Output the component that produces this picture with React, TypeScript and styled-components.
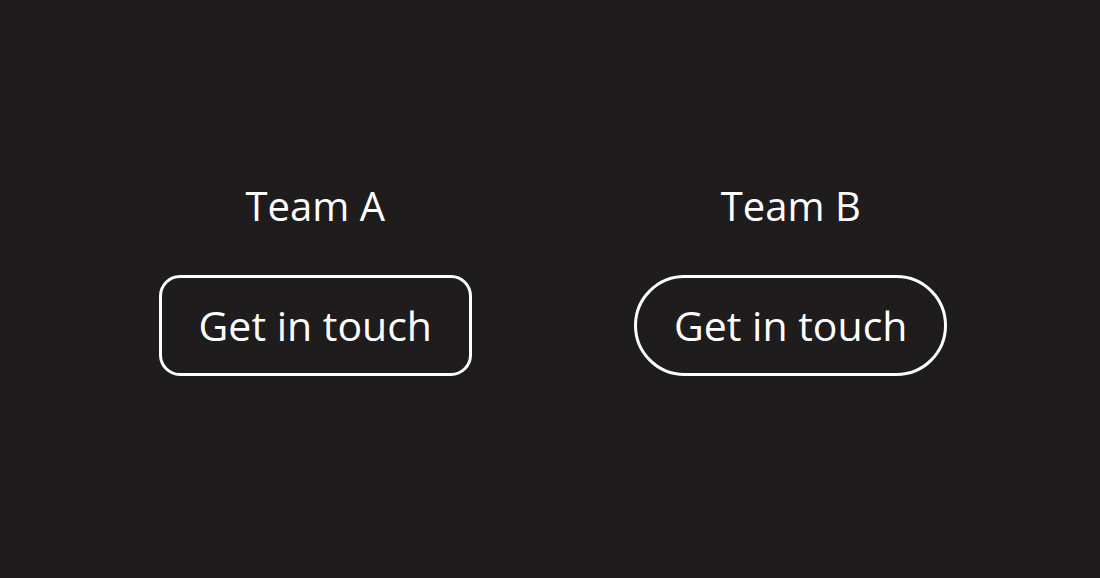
import React from "react";
import styled, { createGlobalStyle } from "styled-components";

const Global = createGlobalStyle`
  html, body { margin: 0; padding: 0; background: #1e1c1d; }
  body { font-family: "Open Sans", "Noto Sans", sans-serif; color: #ffffff; }
`;

const Page = styled.div`
  width: 1100px;
  height: 578px;
  box-sizing: border-box;
  padding: 0 0 18px 6px;
  display: flex;
  align-items: center;
  justify-content: center;
  gap: 162px;
  background: #1e1c1d;
`;

const Column = styled.div`
  display: flex;
  flex-direction: column;
  align-items: center;
  gap: 47px;
`;

const Title = styled.div`
  font-size: 40px;
  line-height: 44px;
  color: #ffffff;
`;

const Button = styled.button<{ $pill?: boolean }>`
  font-family: "Open Sans", "Noto Sans", sans-serif;
  font-size: 41px;
  line-height: 49px;
  color: #ffffff;
  background: transparent;
  border: 3px solid #ffffff;
  border-radius: ${(p) => (p.$pill ? "999px" : "21px")};
  padding: 23px 37px;
  cursor: pointer;
`;

export default function App() {
  return (
    <>
      <Global />
      <Page>
        <Column>
          <Title>Team A</Title>
          <Button>Get in touch</Button>
        </Column>
        <Column>
          <Title>Team B</Title>
          <Button $pill>Get in touch</Button>
        </Column>
      </Page>
    </>
  );
}
